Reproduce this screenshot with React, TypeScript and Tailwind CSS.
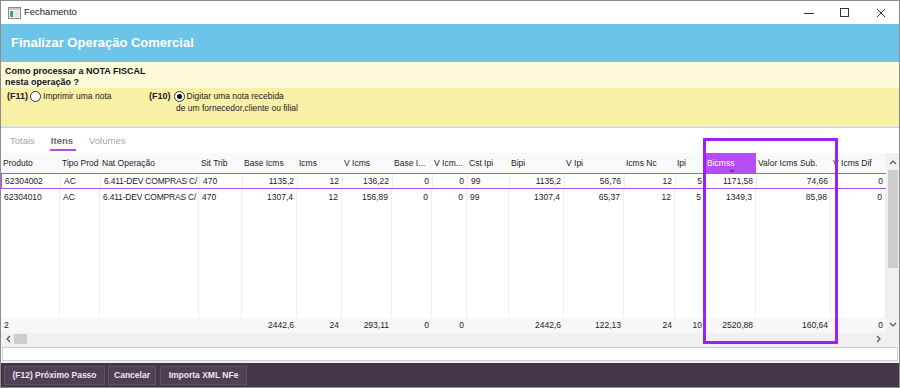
import React from "react";

type Col = { h: string; w: number; right: boolean };

const cols: Col[] = [
  { h: "Produto", w: 59, right: false },
  { h: "Tipo Prod", w: 40, right: false },
  { h: "Nat Operação", w: 99, right: false },
  { h: "Sit Trib", w: 43, right: false },
  { h: "Base Icms", w: 55, right: true },
  { h: "Icms", w: 45, right: true },
  { h: "V Icms", w: 50, right: true },
  { h: "Base I...", w: 40, right: true },
  { h: "V Icm...", w: 35, right: true },
  { h: "Cst Ipi", w: 42, right: false },
  { h: "Bipi", w: 55, right: true },
  { h: "V Ipi", w: 60, right: true },
  { h: "Icms Nc", w: 51, right: true },
  { h: "Ipi", w: 30, right: true },
  { h: "Bicmss", w: 51, right: true },
  { h: "Valor Icms Sub.", w: 75, right: true },
  { h: "V Icms Dif", w: 55, right: true },
];

const rows: string[][] = [
  ["62304002", "AC", "6.411-DEV COMPRAS C/", "470", "1135,2", "12", "136,22", "0", "0", "99", "1135,2", "56,76", "12", "5", "1171,58", "74,66", "0"],
  ["62304010", "AC", "6.411-DEV COMPRAS C/", "470", "1307,4", "12", "156,89", "0", "0", "99", "1307,4", "65,37", "12", "5", "1349,3", "85,98", "0"],
];

const totals = ["2", "", "", "", "2442,6", "24", "293,11", "0", "0", "", "2442,6", "122,13", "24", "10", "2520,88", "160,64", "0"];

function Radio({ checked }: { checked?: boolean }) {
  return (
    <span className="w-[11px] h-[11px] rounded-full border border-[#333] bg-white flex items-center justify-center shrink-0">
      {checked && <span className="w-[5px] h-[5px] rounded-full bg-[#111]" />}
    </span>
  );
}

function Cells({ values, lines }: { values: string[]; lines?: boolean }) {
  return (
    <>
      {cols.map((c, i) => (
        <div
          key={i}
          style={{ width: c.w }}
          className={`shrink-0 h-full flex items-center overflow-hidden whitespace-nowrap ${
            c.right ? "justify-end pr-[3px]" : "pl-[3px]"
          } ${lines ? "border-r border-[#ededed]" : ""} ${i === 13 ? "pr-0" : ""} ${
            i === 2 ? "tracking-[-0.2px] pl-[2px]" : ""
          }`}
        >
          {values[i]}
        </div>
      ))}
    </>
  );
}

export default function App() {
  return (
    <div className="relative w-[900px] h-[388px] border border-[#8c8c8c] bg-white flex flex-col overflow-hidden font-['Liberation_Sans',Arial,sans-serif] text-[8.5px] text-[#1c1c1c]">
      {/* title bar */}
      <div className="h-[23px] shrink-0 flex items-center bg-white">
        <svg width="13" height="12" viewBox="0 0 13 12" className="ml-[7px]">
          <rect x="0.5" y="0.5" width="12" height="11" fill="#f4f4f4" stroke="#8a8a8a" />
          <rect x="1" y="1" width="11" height="2" fill="#c9c9c9" />
          <rect x="2" y="4" width="3" height="6" fill="#3aa56a" />
          <rect x="5" y="4" width="6" height="6" fill="#dfe6ee" />
        </svg>
        <span className="ml-[3px] text-[9.5px] text-[#222]">Fechamento</span>
        <div className="ml-auto flex items-center h-full">
          <svg width="10" height="10" viewBox="0 0 10 10" className="mr-[26px]">
            <line x1="0" y1="5.5" x2="10" y2="5.5" stroke="#333" strokeWidth="1" />
          </svg>
          <svg width="9" height="9" viewBox="0 0 9 9" className="mr-[27px]">
            <rect x="0.5" y="0.5" width="8" height="8" fill="none" stroke="#333" strokeWidth="1" />
          </svg>
          <svg width="10" height="10" viewBox="0 0 10 10" className="mr-[13px]">
            <path d="M1 1 L9 9 M9 1 L1 9" stroke="#333" strokeWidth="1" />
          </svg>
        </div>
      </div>

      {/* blue header */}
      <div className="h-[38px] shrink-0 bg-[#6cc4e9] flex items-center pl-[10px]">
        <span className="text-white font-bold text-[13px]">Finalizar Operação Comercial</span>
      </div>

      {/* question */}
      <div className="h-[26px] shrink-0 bg-[#fefbdb] pl-[4px] pt-[4px] font-bold text-[9px] leading-[11px] text-[#111]">
        <div>Como processar a NOTA FISCAL</div>
        <div>nesta operação ?</div>
      </div>
      <div className="h-[37px] shrink-0 bg-[#f8f0a6] flex pt-[3px] text-[8.5px] text-[#222]">
        <div className="flex items-start w-[148px] pl-[6px]">
          <span className="font-bold text-[9px] leading-[11px]">(F11)</span>
          <span className="ml-[2px]">
            <Radio />
          </span>
          <span className="ml-[2px] leading-[11px]">Imprimir uma nota</span>
        </div>
        <div className="flex flex-col">
          <div className="flex items-start">
            <span className="font-bold text-[9px] leading-[11px]">(F10)</span>
            <span className="ml-[3px]">
              <Radio checked />
            </span>
            <span className="ml-[2px] leading-[11px]">Digitar uma nota recebida</span>
          </div>
          <div className="pl-[27px] leading-[13px]">de um fornecedor,cliente ou filial</div>
        </div>
      </div>
      <div className="h-[3px] shrink-0 bg-[#e6e6e6] border-b border-[#d2d2d2]" />

      {/* tabs */}
      <div className="h-[25px] shrink-0 flex items-start pt-[6px] pl-[9px] gap-[16px] text-[9.5px]">
        <span className="text-[#a6a6a6]">Totais</span>
        <span className="relative font-bold text-[#6a6a6a]">
          Itens
          <span className="absolute left-[-1px] right-[-3px] top-[15px] h-[2px] bg-[#b04fe6]" />
        </span>
        <span className="text-[#a6a6a6]">Volumes</span>
      </div>

      {/* grid */}
      <div className="h-[180px] shrink-0 flex">
        <div className="w-[885px] flex flex-col">
          <div className="h-[20px] flex bg-[#f9f9f9] text-[#222]">
            {cols.map((c, i) => (
              <div
                key={i}
                style={{ width: c.w }}
                className={`shrink-0 h-full flex items-center pl-[2px] whitespace-nowrap overflow-hidden relative ${
                  i === 14 ? "bg-[#b54cf5] text-white" : ""
                }`}
              >
                {c.h}
                {i === 14 && (
                  <span className="absolute left-[24px] bottom-[0px] w-0 h-0 border-l-[3px] border-r-[3px] border-t-[3px] border-l-transparent border-r-transparent border-t-[#7b2ca6]" />
                )}
              </div>
            ))}
          </div>
          <div className="h-[16px] flex border-y border-l border-[#a653e3]">
            <Cells values={rows[0]} lines />
          </div>
          <div className="h-[16px] flex">
            <Cells values={rows[1]} lines />
          </div>
          <div className="flex-1 flex">
            <Cells values={cols.map(() => "")} lines />
          </div>
          <div className="h-[15px] flex bg-[#f7f7f7]">
            <Cells values={totals} />
          </div>
        </div>
        <div className="flex-1 bg-[#f0f0f0] flex flex-col items-center">
          <svg width="8" height="6" viewBox="0 0 8 6" className="mt-[6px]">
            <path d="M1 5 L4 2 L7 5" fill="none" stroke="#555" strokeWidth="1.2" />
          </svg>
          <div className="mt-[5px] w-[10px] h-[98px] bg-[#cdcdcd]" />
          <svg width="8" height="6" viewBox="0 0 8 6" className="mt-auto mb-[5px]">
            <path d="M1 1 L4 4 L7 1" fill="none" stroke="#555" strokeWidth="1.2" />
          </svg>
        </div>
      </div>

      {/* horizontal scrollbar */}
      <div className="h-[12px] shrink-0 bg-[#f0f0f0] flex items-center">
        <svg width="6" height="8" viewBox="0 0 6 8" className="ml-[4px]">
          <path d="M5 1 L2 4 L5 7" fill="none" stroke="#555" strokeWidth="1.2" />
        </svg>
        <div className="ml-[3px] w-[13px] h-[10px] bg-[#cdcdcd]" />
        <svg width="6" height="8" viewBox="0 0 6 8" className="ml-auto mr-[17px]">
          <path d="M1 1 L4 4 L1 7" fill="none" stroke="#555" strokeWidth="1.2" />
        </svg>
      </div>
      <div className="h-[2px] shrink-0 bg-[#f0f0f0]" />
      <div className="h-[14px] shrink-0 mx-[1px] bg-white border border-[#cfcfcf]" />
      <div className="h-[2px] shrink-0 bg-[#f0f0f0]" />

      {/* bottom bar */}
      <div className="flex-1 bg-[#433748] flex items-center pl-[3px] gap-[3px] font-bold text-[8.5px] text-[#ece8ee]">
        <div className="h-[19px] w-[101px] flex items-center justify-center bg-[#4d4153] border border-[#5f5366]">
          (F12) Próximo Passo
        </div>
        <div className="h-[19px] w-[48px] flex items-center justify-center bg-[#4d4153] border border-[#5f5366]">
          Cancelar
        </div>
        <div className="ml-[1px] h-[19px] w-[87px] flex items-center justify-center bg-[#4d4153] border border-[#5f5366]">
          Importa XML NFe
        </div>
      </div>

      {/* highlight overlay */}
      <div className="absolute left-[702px] top-[137px] w-[135px] h-[206px] border-[3px] border-[#9f20f2] pointer-events-none" />
    </div>
  );
}
